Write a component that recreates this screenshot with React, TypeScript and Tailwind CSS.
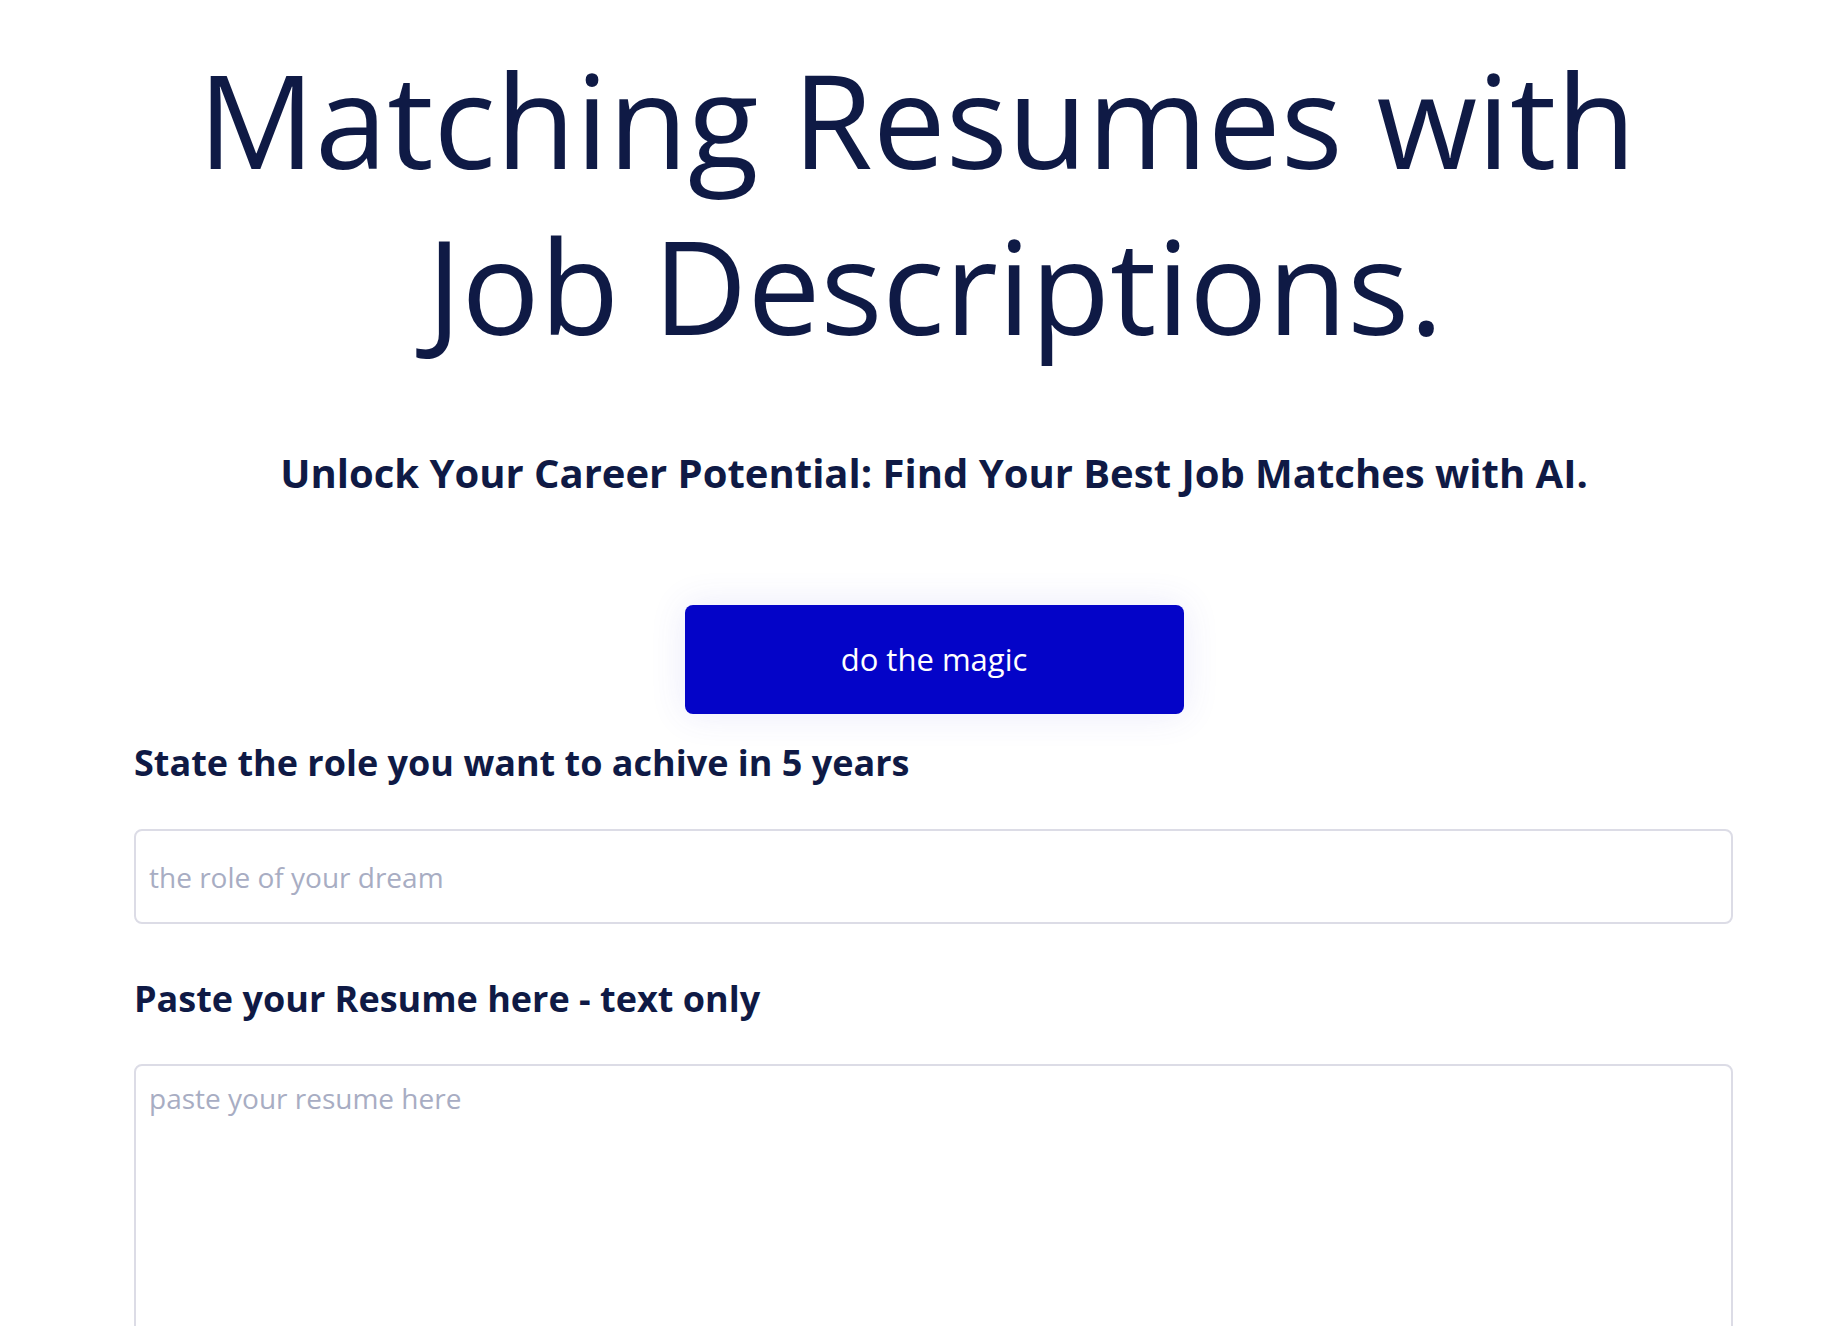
export default function App() {
  return (
    <div className="min-h-screen bg-white font-['Open_Sans',sans-serif] text-[#0f1a45]">
      <main className="flex flex-col pb-10">
        <h1 className="mt-[36px] flex flex-col items-center text-[130px] font-normal leading-[166px]">
          <span className="pr-[10px]">Matching Resumes with</span>
          <span className="pl-[26px]">Job Descriptions.</span>
        </h1>

        <p className="mt-[79px] pl-[24px] text-center text-[40px] font-bold leading-[52px]">
          Unlock Your Career Potential: Find Your Best Job Matches with AI.
        </p>

        <div className="mt-[106px] flex justify-center pl-[24px]">
          <button className="h-[109px] w-[499px] rounded-[8px] bg-[#0404c8] text-[31px] font-medium text-white shadow-[0_0_36px_rgba(70,70,210,0.12)]">
            do the magic
          </button>
        </div>

        <form className="flex flex-col pl-[134px] pr-[111px]">
          <label className="mt-[26px] text-[36px] font-bold leading-[46px]">
            State the role you want to achive in 5 years
          </label>
          <input
            type="text"
            placeholder="the role of your dream"
            className="mt-[43px] h-[95px] rounded-[8px] border-2 border-[#dcdce6] px-[13px] text-[28px] text-[#0f1a45] outline-none placeholder:text-[#a8adc3]"
          />

          <label className="mt-[52px] text-[36px] font-bold leading-[46px]">
            Paste your Resume here - text only
          </label>
          <textarea
            placeholder="paste your resume here"
            className="mt-[42px] h-[420px] resize-none rounded-[8px] border-2 border-[#dcdce6] px-[13px] pt-[13px] text-[28px] leading-[38px] text-[#0f1a45] outline-none placeholder:text-[#a8adc3]"
          />
        </form>
      </main>
    </div>
  )
}
